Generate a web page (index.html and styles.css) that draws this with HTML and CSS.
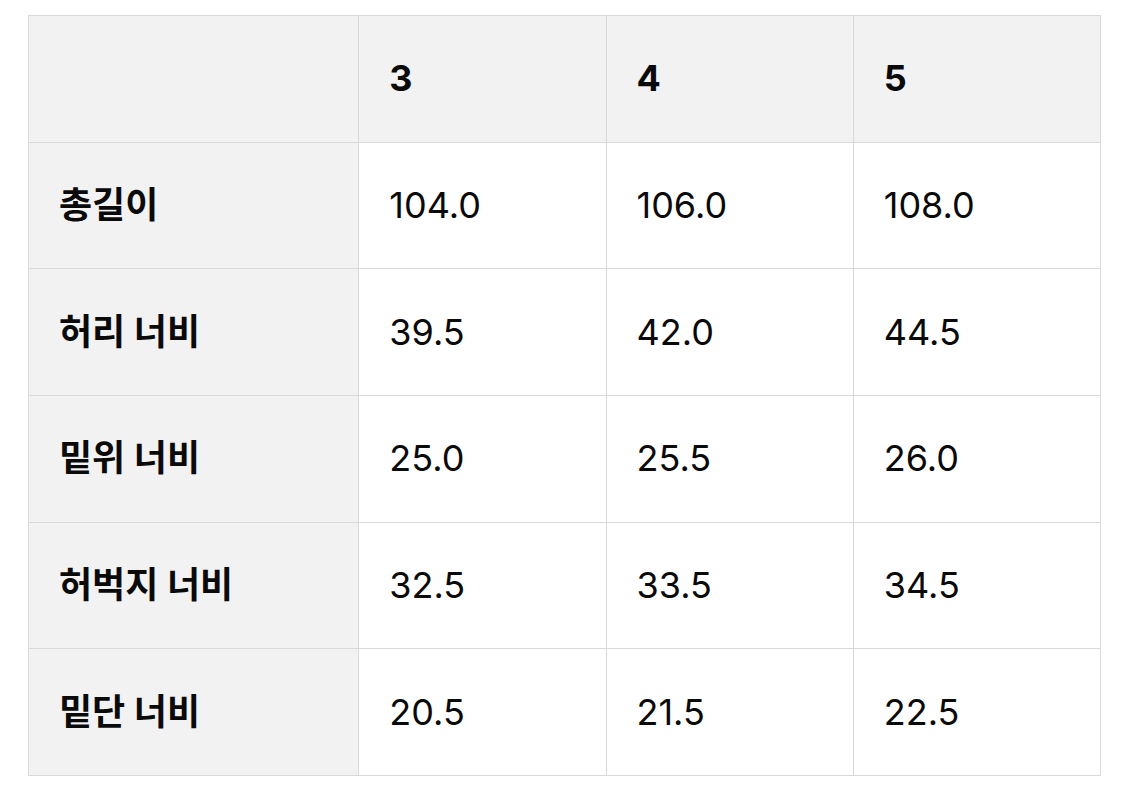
FILE: index.html
```html
<!DOCTYPE html>
<html lang="ko">
<head>
<meta charset="utf-8">
<link rel="stylesheet" href="styles.css">
</head>
<body>
<table class="size-table">
  <colgroup>
    <col class="c-label">
    <col class="c-val">
    <col class="c-val">
    <col class="c-val">
  </colgroup>
  <thead>
    <tr><th></th><th>3</th><th>4</th><th>5</th></tr>
  </thead>
  <tbody>
    <tr><th>총길이</th><td>104.0</td><td>106.0</td><td>108.0</td></tr>
    <tr><th>허리 너비</th><td>39.5</td><td>42.0</td><td>44.5</td></tr>
    <tr><th>밑위 너비</th><td>25.0</td><td>25.5</td><td>26.0</td></tr>
    <tr><th>허벅지 너비</th><td>32.5</td><td>33.5</td><td>34.5</td></tr>
    <tr><th>밑단 너비</th><td>20.5</td><td>21.5</td><td>22.5</td></tr>
  </tbody>
</table>
</body>
</html>
```

FILE: styles.css
```css
html, body {
  margin: 0;
  padding: 0;
  background: #ffffff;
}
body {
  padding: 15px 0 0 28px;
  font-family: Inter, "Noto Sans CJK KR", sans-serif;
  color: #0a0a0a;
}
.size-table {
  border-collapse: collapse;
  width: 1073px;
  table-layout: fixed;
}
.c-label { width: 330px; }
.c-val { width: 247px; }
.size-table th,
.size-table td {
  border: 1.5px solid #d9d9d9;
  height: 126.7px;
  padding: 0 0 0 30px;
  text-align: left;
  vertical-align: middle;
  font-size: 36px;
  line-height: 1.2;
  box-sizing: border-box;
}
.size-table thead th {
  background: #f2f2f2;
  font-weight: 700;
}
.size-table tbody th {
  background: #f2f2f2;
  font-weight: 700;
}
.size-table td {
  font-weight: 400;
  background: #ffffff;
}
```
